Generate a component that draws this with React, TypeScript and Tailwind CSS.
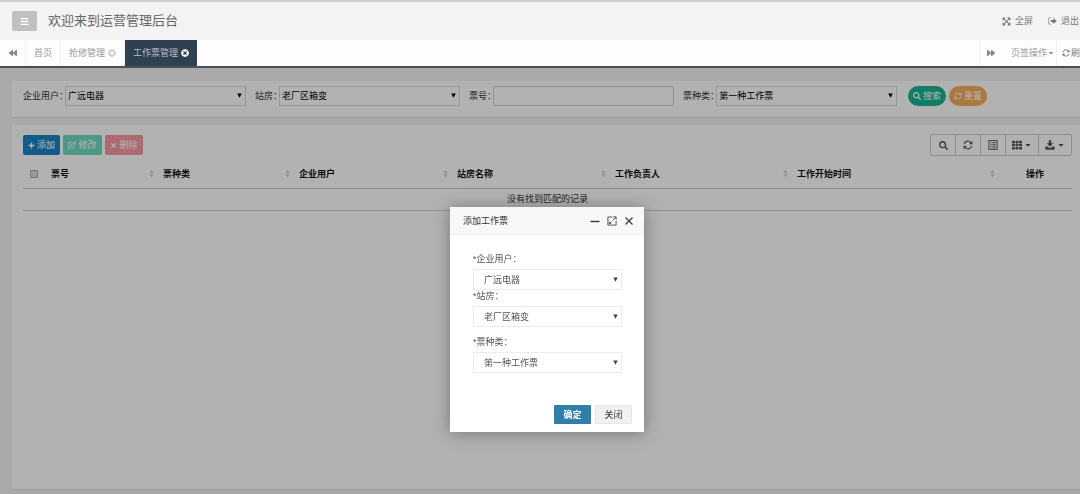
import { ReactNode, useState } from 'react';
import {
  FaBackward,
  FaBars,
  FaCaretDown,
  FaExpandArrowsAlt,
  FaForward,
  FaPlus,
  FaRegEdit,
  FaSearch,
  FaTh,
  FaTimes,
  FaTimesCircle
} from 'react-icons/fa';

const COLUMNS = [
  { title: '票号', width: 'w-[112px]' },
  { title: '票种类', width: 'w-[136px]' },
  { title: '企业用户', width: 'w-[158px]' },
  { title: '站房名称', width: 'w-[158px]' },
  { title: '工作负责人', width: 'w-[182px]' },
  { title: '工作开始时间', width: 'w-[207px]' }
];

function Arrow({ className }: { className: string }) {
  return (
    <svg viewBox="0 0 6 6" className={`pointer-events-none absolute h-[5px] w-[5px] fill-current ${className}`} aria-hidden="true">
      <path d="M0.3 0.5h5.4L3 5.8z" />
    </svg>
  );
}

function SortIcon() {
  return (
    <svg viewBox="0 0 6 10" className="h-[9px] w-[5px] shrink-0 fill-[#cfcfcf]" aria-hidden="true">
      <path d="M3 0.5L5.5 4.3h-5zM3 9.5L5.5 5.7h-5z" />
    </svg>
  );
}

function ExitIcon() {
  return (
    <svg viewBox="0 0 16 14" className="h-2 w-[9px] fill-current" aria-hidden="true">
      <path d="M5 1.2H3.2A2.2 2.2 0 0 0 1 3.4v7.2a2.2 2.2 0 0 0 2.2 2.2H5" fill="none" stroke="currentColor" strokeWidth="1.2" />
      <path d="M5 5h4.5V1.8L15.5 7l-6 5.2V9H5z" />
    </svg>
  );
}

function RefreshIcon({ className }: { className: string }) {
  return (
    <svg viewBox="0 0 16 16" className={`shrink-0 ${className}`} aria-hidden="true">
      <path d="M2 6.8A6.1 6.1 0 0 1 12.8 4M14 9.2A6.1 6.1 0 0 1 3.2 12" fill="none" stroke="currentColor" strokeWidth="1.9" />
      <path d="M15 1v5.6H9.4zM1 15V9.4h5.6z" fill="currentColor" />
    </svg>
  );
}

function ListAltIcon() {
  return (
    <svg viewBox="0 0 14 14" className="h-[10px] w-[10px]" fill="none" stroke="currentColor" aria-hidden="true">
      <rect x="1.2" y="0.8" width="11.6" height="12.4" strokeWidth="1.3" />
      <path d="M3.4 3.5h1.6M3.4 6h1.6M3.4 8.5h1.6M3.4 11h1.6M6.2 3.5h4.6M6.2 6h4.6M6.2 8.5h4.6M6.2 11h4.6" strokeWidth="1.3" />
    </svg>
  );
}

function DownloadIcon() {
  return (
    <svg viewBox="0 0 14 14" className="h-[10px] w-[10px] fill-current" aria-hidden="true">
      <path d="M5.3 0.5h3.4v4.2h3L7 9.4 2.3 4.7h3zM0.5 9.2h3.2L5.4 11h3.2l1.7-1.8h3.2v4.3h-13z" />
    </svg>
  );
}

function SearchField({ id, label, value }: { id: string; label: string; value?: string }) {
  return (
    <div className="flex items-center">
      <label htmlFor={id} className="-mr-[3px] whitespace-nowrap">{label}：</label>
      {value ? (
        <div className="relative">
          <select id={id} className="h-5 w-[181px] appearance-none border border-[#dadada] bg-transparent pl-[2px] text-black">
            <option>{value}</option>
          </select>
          <Arrow className="right-1 top-[7px] text-black" />
        </div>
      ) : (
        <input id={id} type="text" className="h-5 w-[181px] rounded-[2px] border border-[#cfcfcf] bg-transparent px-[3px]" />
      )}
    </div>
  );
}

function DialogField({ id, label, value, className }: { id: string; label: string; value: string; className?: string }) {
  return (
    <div className={className}>
      <label htmlFor={id} className="mb-1 block h-3 leading-3">*{label}：</label>
      <div className="relative">
        <select id={id} className="block h-[21px] w-full appearance-none border border-[#ebebeb] bg-white pl-[10px]">
          <option>{value}</option>
        </select>
        <Arrow className="right-1 top-2 text-[#444]" />
      </div>
    </div>
  );
}

function ToolButton({ label, dropdown, children }: { label: string; dropdown?: boolean; children: ReactNode }) {
  return (
    <button
      type="button"
      aria-label={label}
      className={`-ml-px flex h-[22px] items-center justify-center gap-[2px] border border-[#cacaca] text-[9px] text-[#555] first:rounded-l-[2px] last:rounded-r-[2px] ${dropdown ? 'w-[34px]' : 'w-[26px]'}`}
    >
      {children}
      {dropdown && <FaCaretDown className="text-[8px]" />}
    </button>
  );
}

export default function App() {
  const [dialogOpen, setDialogOpen] = useState(true);

  return (
    <div className="flex min-h-screen flex-col overflow-hidden bg-[#f3f3f4] font-['Liberation_Sans','Noto_Sans_CJK_SC',sans-serif] text-[9px] leading-3 text-[#333]">
      <header className="flex h-10 items-center border-t-2 border-[#cdcdcd] bg-[#f3f3f3] pl-3 pr-px text-[#777]">
        <button type="button" aria-label="菜单" className="flex h-5 w-[25px] items-center justify-center rounded-[2px] bg-[#c0c0c0] text-white">
          <FaBars />
        </button>
        <h1 className="ml-[11px] text-[13px] leading-5 text-[#666]">欢迎来到运营管理后台</h1>
        <nav className="ml-auto flex gap-[15px] whitespace-nowrap">
          <a href="#" className="flex items-center gap-1"><FaExpandArrowsAlt />全屏</a>
          <a href="#" className="flex items-center gap-1"><ExitIcon />退出</a>
        </nav>
      </header>

      <nav className="flex h-7 border-b-2 border-[#4a5056] bg-[#fdfdfd] whitespace-nowrap text-[#999]">
        <button type="button" aria-label="向左" className="flex w-[26px] items-center justify-center border-r border-[#f0f0f0] text-[8px] text-[#888]"><FaBackward /></button>
        <a href="#" className="flex items-center border-r border-[#f0f0f0] px-2">首页</a>
        <a href="#" className="flex items-center gap-[3px] border-r border-[#f0f0f0] px-2">抢修管理<FaTimesCircle className="text-[8px] text-[#ccc]" /></a>
        <a href="#" className="flex items-center gap-[3px] bg-[#2f4050] px-2 text-[#b4bdc6]">工作票管理<FaTimesCircle className="text-[8px] text-white" /></a>
        <button type="button" aria-label="向右" className="ml-auto flex w-[23px] items-center justify-center border-l border-[#f0f0f0] text-[8px] text-[#888]"><FaForward /></button>
        <button type="button" className="flex items-center border-r border-[#f0f0f0] pl-[9px] pr-px">页签操作<FaCaretDown className="text-[8px]" /></button>
        <a href="#" aria-label="刷新" className="flex items-center gap-px pl-[5px] text-[#777]"><RefreshIcon className="h-2 w-2" />刷</a>
      </nav>

      <main className="relative flex flex-1 flex-col gap-[7px] pb-1 pl-3 pt-[13px]">
        <form className="flex h-[37px] gap-[11px] border-b border-[#d8d8d8] bg-white pl-[11px] pt-[5px] whitespace-nowrap" onSubmit={(event) => event.preventDefault()}>
          <div className="flex h-5 gap-[9px]">
            <SearchField id="search-company" label="企业用户" value="广远电器" />
            <SearchField id="search-station" label="站房" value="老厂区箱变" />
            <SearchField id="search-number" label="票号" />
            <SearchField id="search-type" label="票种类" value="第一种工作票" />
          </div>
          <div className="flex h-5 gap-[3px] text-white">
            <button type="submit" className="flex w-[38px] items-center justify-center gap-[2px] rounded-full bg-[#1ab394]"><FaSearch className="text-[8px]" />搜索</button>
            <button type="reset" className="flex w-[38px] items-center justify-center gap-[2px] rounded-full bg-[#f8ac59]"><RefreshIcon className="h-2 w-2" />重置</button>
          </div>
        </form>

        <section className="flex-1 border-b border-[#dedede] bg-white pl-[11px] pr-2 pt-[9px]">
          <div className="flex items-start justify-between">
            <div className="flex gap-[3px] pt-px text-white">
              <button type="button" onClick={() => setDialogOpen(true)} className="flex h-5 w-[37px] items-center justify-center gap-[2px] rounded-[2px] bg-[#1c84c6]"><FaPlus className="text-[7px]" />添加</button>
              <button type="button" disabled className="flex h-5 w-[39px] items-center justify-center gap-[2px] rounded-[2px] bg-[#6fd8bf]"><FaRegEdit className="text-[8px]" />修改</button>
              <button type="button" disabled className="flex h-5 w-[38px] items-center justify-center gap-[2px] rounded-[2px] bg-[#f698a4]"><FaTimes className="text-[7px]" />删除</button>
            </div>
            <div className="flex">
              <ToolButton label="搜索"><FaSearch /></ToolButton>
              <ToolButton label="刷新"><RefreshIcon className="h-[10px] w-[10px]" /></ToolButton>
              <ToolButton label="切换"><ListAltIcon /></ToolButton>
              <ToolButton label="列" dropdown><FaTh className="text-[10px]" /></ToolButton>
              <ToolButton label="导出" dropdown><DownloadIcon /></ToolButton>
            </div>
          </div>

          <table className="mt-1 w-full table-fixed border-collapse text-left">
            <thead>
              <tr className="h-7 border-b border-[#c8c8c8] text-[#111]">
                <th className="w-[22px] pl-[7px]">
                  <input type="checkbox" aria-label="全选" className="block h-2 w-2 appearance-none rounded-[1px] border border-[#aaa] bg-[#dcdcdc]" />
                </th>
                {COLUMNS.map((column) => (
                  <th key={column.title} className={`${column.width} pl-[6px] pr-[3px] font-bold`}>
                    <div className="flex items-center justify-between">{column.title}<SortIcon /></div>
                  </th>
                ))}
                <th className="w-[74px] text-center font-bold">操作</th>
              </tr>
            </thead>
            <tbody>
              <tr className="h-[22px] border-b border-[#d0d0d0]">
                <td colSpan={8} className="text-center">没有找到匹配的记录</td>
              </tr>
            </tbody>
          </table>
        </section>

        {dialogOpen && <div className="absolute inset-0 bg-black/30" />}
      </main>

      {dialogOpen && (
        <div className="fixed inset-0 flex items-start justify-center pl-[14px] pt-[207px]">
          <div role="dialog" aria-labelledby="dialog-title" className="w-[194px] bg-white text-[#555] shadow-[0_1px_16px_rgba(0,0,0,0.35)]">
            <div className="flex h-7 items-center justify-between border-b border-[#eee] bg-[#f8f8f8] pl-[13px] pr-[10px] text-[#333]">
              <h2 id="dialog-title">添加工作票</h2>
              <div className="flex gap-[7px]">
                <button type="button" aria-label="最小化">
                  <svg viewBox="0 0 10 10" className="h-[10px] w-[10px]" stroke="currentColor" strokeWidth="1.4"><path d="M0.5 5.5h9" /></svg>
                </button>
                <button type="button" aria-label="最大化">
                  <svg viewBox="0 0 10 10" className="h-[10px] w-[10px]" fill="none" stroke="currentColor" strokeWidth="0.8">
                    <path d="M5.4 1H0.9v8.1h8.2V4.8M6.2 0.9h2.9v2.9M9 1L5.8 4.2M4.2 7.5H2.4V5.7M2.5 7.4l1.9-1.9" />
                  </svg>
                </button>
                <button type="button" aria-label="关闭窗口" onClick={() => setDialogOpen(false)}>
                  <svg viewBox="0 0 10 10" className="h-[10px] w-[10px]" stroke="currentColor" strokeWidth="1.1"><path d="M1.5 1.5l7 7M8.5 1.5l-7 7" /></svg>
                </button>
              </div>
            </div>
            <div className="pl-[23px] pr-[22px] pt-[18px]">
              <DialogField id="company" label="企业用户" value="广远电器" />
              <DialogField id="station" label="站房" value="老厂区箱变" />
              <DialogField id="type" label="票种类" value="第一种工作票" className="mt-[9px]" />
            </div>
            <div className="mt-8 flex justify-end gap-1 pb-2 pr-3">
              <button type="button" className="h-[19px] w-[37px] rounded-[1px] bg-[#2e80ab] font-bold text-white">确定</button>
              <button type="button" onClick={() => setDialogOpen(false)} className="h-[19px] w-[37px] rounded-[1px] border border-[#e6e6e6] bg-[#f1f1f1] text-[#333]">关闭</button>
            </div>
          </div>
        </div>
      )}
    </div>
  );
}
